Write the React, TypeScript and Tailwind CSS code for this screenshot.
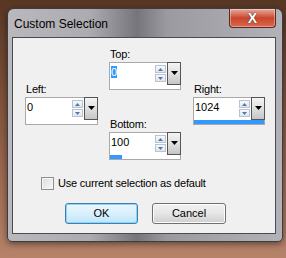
// Custom Selection dialog (Windows 7 Aero look)

type SpinProps = {
  value: string;
  selected?: boolean;
  fill: number; // 0..1 share of the slider strip
  width: string;
};

function Spinner() {
  return (
    <div className="flex flex-col gap-[1px] mt-[2px] mr-[1px]">
      <div className="w-[11px] h-[8px] border border-[#b8c4d4] bg-gradient-to-b from-[#f8f8f8] to-[#e2e6ec] flex items-center justify-center">
        <svg width="5" height="3" viewBox="0 0 5 3">
          <path d="M0 3 L2.5 0 L5 3 Z" fill="#4d78b8" />
        </svg>
      </div>
      <div className="w-[11px] h-[8px] border border-[#b8c4d4] bg-gradient-to-b from-[#f8f8f8] to-[#e2e6ec] flex items-center justify-center">
        <svg width="5" height="3" viewBox="0 0 5 3">
          <path d="M0 0 L5 0 L2.5 3 Z" fill="#4d78b8" />
        </svg>
      </div>
    </div>
  );
}

function SpinField({ value, selected, fill, width }: SpinProps) {
  return (
    <div className={`${width} h-[28px] border border-[#a9a9a9] bg-white flex flex-col`}>
      <div className="flex h-[22px]">
        <div className="flex-1 flex items-start justify-between">
          <span className="pl-[1px] pt-[3px] text-[11px] leading-[13px] text-black">
            {selected ? (
              <span className="bg-[#3399ff] text-white">{value}</span>
            ) : (
              value
            )}
          </span>
          <Spinner />
        </div>
        <div className="w-[14px] h-[23px] -mt-[1px] -mr-[1px] border border-[#555558] bg-gradient-to-b from-[#f4f4f4] via-[#e0e0e0] to-[#c6c6c6] flex justify-center pt-[8px]">
          <svg width="7" height="4" viewBox="0 0 7 4">
            <path d="M0 0 L7 0 L3.5 4 Z" fill="#000" />
          </svg>
        </div>
      </div>
      <div className="h-[4px] mt-[0px] bg-white">
        <div className="h-full bg-[#3399ff]" style={{ width: `${fill * 100}%` }} />
      </div>
    </div>
  );
}

function Field({ label, ...rest }: SpinProps & { label: string }) {
  return (
    <div className="flex flex-col">
      <span className="h-[13px] mb-[1px] pl-[1px] text-[11px] leading-[13px] text-black tracking-[-0.2px]">
        {label}
      </span>
      <SpinField {...rest} />
    </div>
  );
}

export default function App() {
  return (
    <div className="w-[286px] h-[258px] overflow-hidden bg-gradient-to-b from-[#573624] via-[#8a5a42] to-[#b6836a] pt-[8px] pl-[7px] font-['Liberation_Sans',Arial,sans-serif]">
      {/* Window frame */}
      <div className="w-[276px] h-[234px] rounded-t-[7px] rounded-b-[5px] border border-[#3c3c42] bg-[linear-gradient(90deg,#b9b9bd_0%,#ababb0_30%,#75757b_47%,#9a9aa0_58%,#b2b2b8_100%)] shadow-[0_2px_6px_rgba(0,0,0,0.45)] flex flex-col">
        {/* Title bar */}
        <div className="h-[28px] flex items-start justify-between">
          <span className="pl-[6px] pt-[8px] text-[12px] leading-[14px] text-black">
            Custom Selection
          </span>
          <div className="mr-[6px] w-[47px] h-[19px] rounded-b-[4px] border border-[#5a2a20] border-t-0 bg-gradient-to-b from-[#e9a898] via-[#c9452c] to-[#d9684c] flex items-center justify-center shadow-[inset_0_0_0_1px_rgba(255,255,255,0.35)]">
            <span className="text-[14px] leading-[14px] font-bold text-white [text-shadow:0_0_1px_#333,0_0_1px_#333]">
              X
            </span>
          </div>
        </div>

        {/* Client area */}
        <div className="ml-[4px] w-[264px] h-[197px] border border-[#4a4a50] bg-[#f0f0f0] flex flex-col">
          <div className="flex pl-[12px]">
            <div className="pt-[45px]">
              <Field label="Left:" value="0" fill={0} width="w-[73px]" />
            </div>
            <div className="ml-[11px] pt-[10px] flex flex-col gap-[28px]">
              <Field label="Top:" value="0" selected fill={0} width="w-[72px]" />
              <Field label="Bottom:" value="100" fill={0.17} width="w-[72px]" />
            </div>
            <div className="ml-[12px] pt-[45px]">
              <Field label="Right:" value="1024" fill={1} width="w-[72px]" />
            </div>
          </div>

          {/* Checkbox */}
          <label className="flex items-center mt-[17px] ml-[28px]">
            <span className="w-[13px] h-[13px] border border-[#8e8f8f] bg-gradient-to-br from-[#dcdcdc] to-[#f8f8f8] shadow-[inset_0_0_0_1px_#f4f4f4]" />
            <span className="ml-[4px] text-[11px] leading-[13px] text-black tracking-[-0.2px]">
              Use current selection as default
            </span>
          </label>

          {/* Buttons */}
          <div className="flex mt-[13px] ml-[52px] gap-[14px]">
            <button className="w-[73px] h-[21px] rounded-[3px] border border-[#3c7fb1] bg-gradient-to-b from-[#eaf6fd] via-[#d9f0fc] to-[#bee6fd] shadow-[inset_0_0_0_1px_#8ed2f5] text-[11px] text-black">
              OK
            </button>
            <button className="w-[74px] h-[21px] rounded-[3px] border border-[#707070] bg-gradient-to-b from-[#f2f2f2] via-[#e6e6e6] to-[#cfcfcf] shadow-[inset_0_0_0_1px_#fcfcfc] text-[11px] text-black">
              Cancel
            </button>
          </div>
        </div>
      </div>
    </div>
  );
}
